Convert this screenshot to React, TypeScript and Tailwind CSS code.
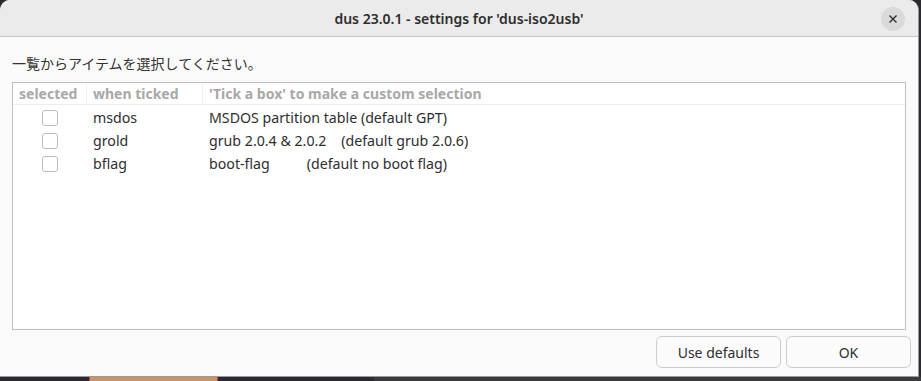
import React from 'react';

const rows = [
  { key: 'msdos', desc: 'MSDOS partition table (default GPT)' },
  { key: 'grold', desc: 'grub 2.0.4 & 2.0.2\u00a0\u00a0\u00a0 (default grub 2.0.6)' },
  { key: 'bflag', desc: 'boot-flag\u00a0\u00a0\u00a0\u00a0\u00a0\u00a0\u00a0\u00a0\u00a0 (default no boot flag)' },
];

export default function App() {
  return (
    <div
      className="w-[921px] h-[381px] bg-[#2a2a30] overflow-hidden relative"
      style={{ fontFamily: '"Noto Sans", "Noto Sans CJK JP", sans-serif' }}
    >
      {/* dialog window */}
      <div className="w-[919px] h-[377px] bg-[#fafafa] rounded-t-[10px] border-r border-b border-[#9a9a9a] flex flex-col overflow-hidden">
        {/* title bar */}
        <div className="h-[37px] shrink-0 bg-[#ebebeb] border-b border-[#c6c6c6] flex items-center justify-center relative">
          <span className="text-[14px] font-semibold text-[#2e2e2e]">dus 23.0.1 - settings for 'dus-iso2usb'</span>
          <div className="absolute right-[13px] top-[7px] w-6 h-6 rounded-full bg-[#dadada] flex items-center justify-center">
            <svg width="10" height="10" viewBox="0 0 10 10">
              <path d="M1.5 1.5 L8.5 8.5 M8.5 1.5 L1.5 8.5" stroke="#2e2e2e" strokeWidth="1.4" />
            </svg>
          </div>
        </div>

        {/* body */}
        <div className="flex-1 flex flex-col pl-3 pr-[7px] pb-2">
          <p className="text-[14px] text-[#333] mt-[17px] mb-[8px] leading-[20px]">一覧からアイテムを選択してください。</p>

          <div className="w-[894px] h-[248px] border border-[#c0c0c0] bg-white">
            <div className="flex h-[22px] pt-[1px] border-b border-[#ececec] text-[14px] font-bold text-[#a8a8a8] leading-[20px]">
              <div className="w-[74px] pl-[6px] border-r border-[#f0f0f0]">selected</div>
              <div className="w-[116px] pl-[6px] border-r border-[#f0f0f0]">when ticked</div>
              <div className="pl-[6px]">'Tick a box' to make a custom selection</div>
            </div>
            <div className="pt-[1px]">
              {rows.map((r) => (
                <div key={r.key} className="flex items-center h-[23px] text-[14.2px] text-[#2e2e2e]">
                  <div className="w-[74px] flex justify-center">
                    <span className="block w-[16px] h-[16px] rounded-[3px] border border-[#bdbdbd] bg-white" />
                  </div>
                  <div className="w-[116px] pl-[6px]">{r.key}</div>
                  <div className="pl-[6px]">{r.desc}</div>
                </div>
              ))}
            </div>
          </div>

          <div className="flex justify-end gap-[5px] mt-[6px]">
            <button className="w-[125px] h-[32px] rounded-[6px] border border-[#cdcdcd] bg-[#fbfbfb] text-[14px] text-[#2e2e2e]">
              Use defaults
            </button>
            <button className="w-[125px] h-[32px] rounded-[6px] border border-[#cdcdcd] bg-[#fbfbfb] text-[14px] text-[#2e2e2e]">
              OK
            </button>
          </div>
        </div>
      </div>

      {/* desktop behind */}
      <div className="absolute left-[89px] bottom-0 w-[129px] h-[4px] bg-[#c79466] border-x border-[#b84a3a]" />
      <div className="absolute left-[374px] bottom-0 w-[547px] h-[4px] bg-[#3a3a3f]" />
    </div>
  );
}
